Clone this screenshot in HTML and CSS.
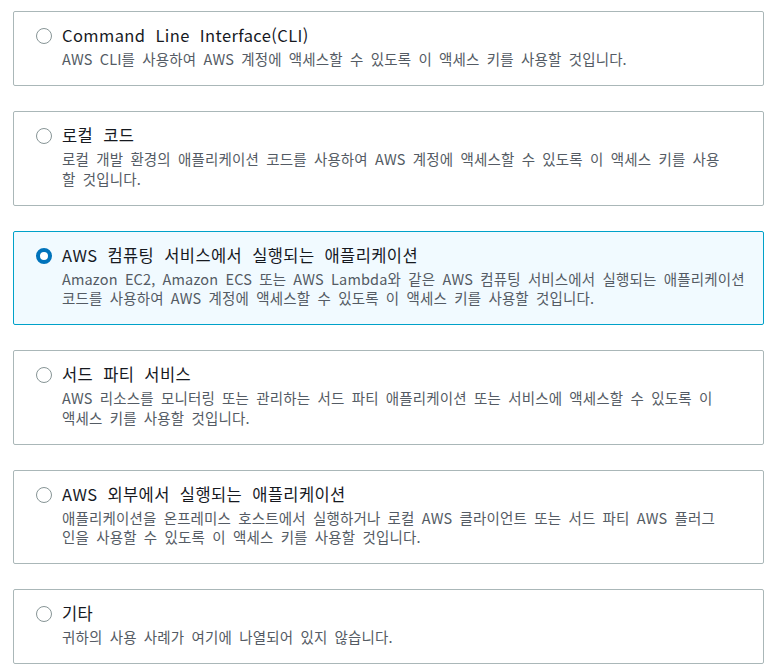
FILE: index.html
```html
<!DOCTYPE html>
<html lang="ko">
<head>
    <meta charset="UTF-8">
    <meta name="viewport" content="width=device-width, initial-scale=1.0">
    <title>액세스 키 사용 사례</title>
    <link rel="stylesheet" href="styles.css">
</head>
<body>
    <div class="tiles">
        <label class="tile">
            <span class="radio"></span>
            <span class="tile-text">
                <span class="tile-title">Command Line Interface(CLI)</span>
                <span class="tile-desc">AWS CLI를 사용하여 AWS 계정에 액세스할 수 있도록 이 액세스 키를 사용할 것입니다.</span>
            </span>
        </label>
        <label class="tile">
            <span class="radio"></span>
            <span class="tile-text">
                <span class="tile-title">로컬 코드</span>
                <span class="tile-desc">로컬 개발 환경의 애플리케이션 코드를 사용하여 AWS 계정에 액세스할 수 있도록 이 액세스 키를 사용<br>할 것입니다.</span>
            </span>
        </label>
        <label class="tile selected">
            <span class="radio"></span>
            <span class="tile-text">
                <span class="tile-title">AWS 컴퓨팅 서비스에서 실행되는 애플리케이션</span>
                <span class="tile-desc">Amazon EC2, Amazon ECS 또는 AWS Lambda와 같은 AWS 컴퓨팅 서비스에서 실행되는 애플리케이션<br>코드를 사용하여 AWS 계정에 액세스할 수 있도록 이 액세스 키를 사용할 것입니다.</span>
            </span>
        </label>
        <label class="tile">
            <span class="radio"></span>
            <span class="tile-text">
                <span class="tile-title">서드 파티 서비스</span>
                <span class="tile-desc">AWS 리소스를 모니터링 또는 관리하는 서드 파티 애플리케이션 또는 서비스에 액세스할 수 있도록 이<br>액세스 키를 사용할 것입니다.</span>
            </span>
        </label>
        <label class="tile">
            <span class="radio"></span>
            <span class="tile-text">
                <span class="tile-title">AWS 외부에서 실행되는 애플리케이션</span>
                <span class="tile-desc">애플리케이션을 온프레미스 호스트에서 실행하거나 로컬 AWS 클라이언트 또는 서드 파티 AWS 플러그<br>인을 사용할 수 있도록 이 액세스 키를 사용할 것입니다.</span>
            </span>
        </label>
        <label class="tile">
            <span class="radio"></span>
            <span class="tile-text">
                <span class="tile-title">기타</span>
                <span class="tile-desc">귀하의 사용 사례가 여기에 나열되어 있지 않습니다.</span>
            </span>
        </label>
    </div>
</body>
</html>
```

FILE: styles.css
```css
body {
    margin: 0;
    padding: 11px 15px 0 13px;
    background: #ffffff;
    font-family: "Noto Sans CJK KR", "Open Sans", sans-serif;
    color: #16191f;
}
.tiles {
    display: flex;
    flex-direction: column;
    gap: 25px;
}
.tile {
    display: flex;
    align-items: flex-start;
    gap: 10px;
    padding: 12px 14px 16.5px 22px;
    border: 1px solid #aab7b8;
    border-radius: 2px;
    background: #ffffff;
    cursor: pointer;
}
.tile.selected {
    border-color: #00a1c9;
    background: #f1faff;
}
.radio {
    flex: none;
    box-sizing: border-box;
    width: 16px;
    height: 16px;
    margin-top: 4px;
    border: 1px solid #879596;
    border-radius: 50%;
    background: #ffffff;
}
.tile.selected .radio {
    border: 4px solid #0073bb;
}
.tile-text {
    display: flex;
    flex-direction: column;
    gap: 3px;
}
.tile-title {
    font-size: 16.5px;
    line-height: 22px;
    letter-spacing: 0.4px;
    word-spacing: 5px;
}
.tile-desc {
    font-size: 14.5px;
    line-height: 19.5px;
    letter-spacing: 0.15px;
    word-spacing: 3px;
    color: #545b64;
}
```
